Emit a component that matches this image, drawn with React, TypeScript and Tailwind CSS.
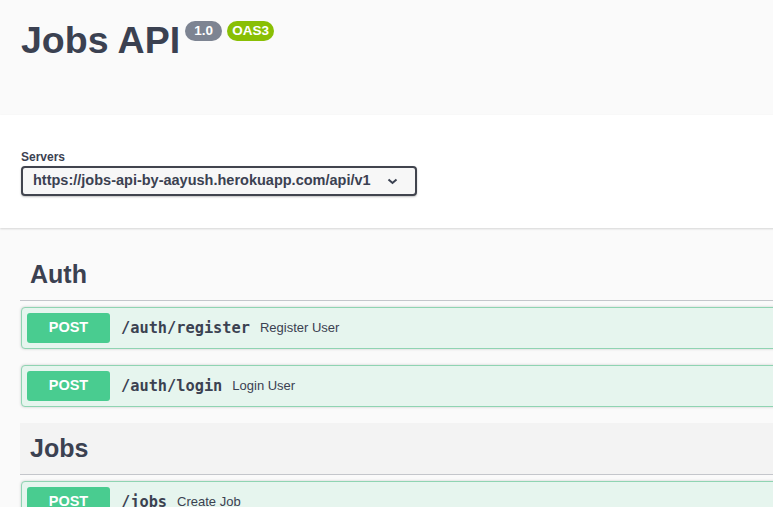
import React from "react";

type Op = { path: string; summary: string };

function OpBlock({ op }: { op: Op }) {
  return (
    <div className="ml-[21px] mb-[16px] h-[42px] flex items-center p-[5px] border border-[#8fd4b2] rounded-[4px] bg-[#e6f5ee] shadow-[0_0_3px_rgba(0,0,0,0.19)]">
      <div className="w-[83px] h-[30px] shrink-0 rounded-[3px] bg-[#49cc90] text-white font-bold text-[14.5px] flex items-center justify-center">
        POST
      </div>
      <span className="pl-[11px] pr-[10px] font-['DejaVu_Sans_Mono',monospace] font-bold text-[15.3px] text-[#3b4151]">
        {op.path}
      </span>
      <span className="text-[13px] text-[#3b4151]">{op.summary}</span>
    </div>
  );
}

function TagHeading({ name, hover }: { name: string; hover?: boolean }) {
  return (
    <div
      className={
        "ml-5 mb-[6px] h-[52px] flex items-center pl-[10px] border-b border-[#c4c6cb] text-[25px] font-bold text-[#3b4151] " +
        (hover ? "bg-[#f3f3f3]" : "")
      }
    >
      {name}
    </div>
  );
}

export default function App() {
  return (
    <div className="w-[773px] h-[507px] overflow-hidden bg-[#fafafa] font-['Liberation_Sans',Arial,sans-serif] text-[#3b4151]">
      <div className="w-[1100px]">
        <div className="h-[115px] pl-[21px] pt-[22px] flex items-start">
          <h2 className="text-[37.5px] leading-[36px] font-bold text-[#3b4151]">Jobs API</h2>
          <div className="flex items-start ml-[5px] -mt-[1px] gap-[5px]">
            <span className="w-[37px] h-[20px] rounded-full bg-[#7d8492] text-white text-[13.5px] font-bold flex items-center justify-center">
              1.0
            </span>
            <span className="w-[47px] h-[20px] rounded-full bg-[#89bf04] text-white text-[13.5px] font-bold flex items-center justify-center">
              OAS3
            </span>
          </div>
        </div>

        <div className="h-[113px] bg-white shadow-[0_1px_2px_0_rgba(0,0,0,0.15)] px-5 pt-[35px]">
          <div className="text-[12px] leading-[14px] font-bold pl-px">Servers</div>
          <div className="mt-[2px] ml-px w-[396px] h-[30px] border-2 border-[#41444e] rounded-[4px] bg-[#f7f7f7] shadow-[0_1px_2px_0_rgba(0,0,0,0.25)] flex items-center pl-[10px] pr-[16px]">
            <span className="text-[14.5px] font-bold text-[#3b4151] flex-1">
              https://jobs-api-by-aayush.herokuapp.com/api/v1
            </span>
            <svg width="11" height="7" viewBox="0 0 11 7" className="mr-[1px]">
              <path d="M1.5 1.5 L5.5 5 L9.5 1.5" fill="none" stroke="#3b4151" strokeWidth="2" />
            </svg>
          </div>
        </div>

        <div className="pt-[21px]">
          <TagHeading name="Auth" />
          <OpBlock op={{ path: "/auth/register", summary: "Register User" }} />
          <OpBlock op={{ path: "/auth/login", summary: "Login User" }} />
          <TagHeading name="Jobs" hover />
          <OpBlock op={{ path: "/jobs", summary: "Create Job" }} />
        </div>
      </div>
    </div>
  );
}
